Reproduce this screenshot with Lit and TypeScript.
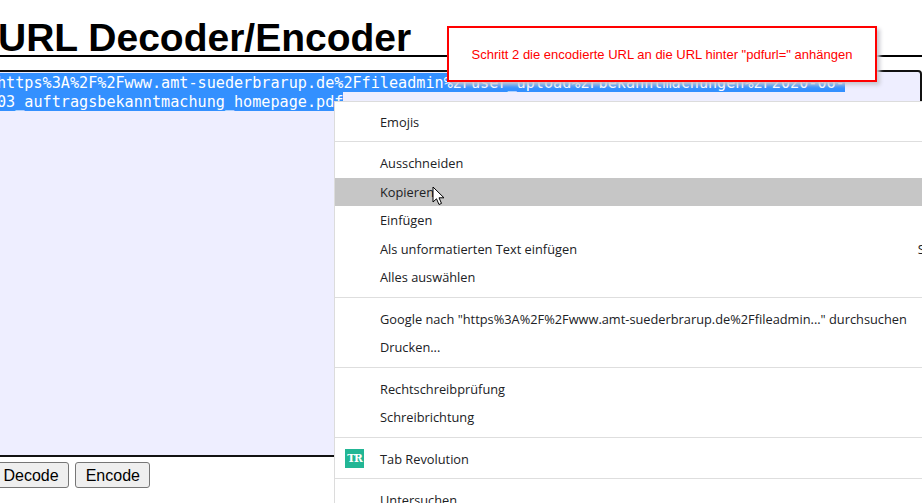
import { LitElement, html, css } from "lit";
import { customElement } from "lit/decorators.js";

type Row = { label: string; short?: string; hover?: boolean; icon?: boolean };

const groups: Row[][] = [
  [{ label: "Emojis" }],
  [
    { label: "Ausschneiden" },
    { label: "Kopieren", hover: true },
    { label: "Einfügen" },
    { label: "Als unformatierten Text einfügen", short: "Strg+Umschalt+V" },
    { label: "Alles auswählen" },
  ],
  [
    { label: 'Google nach "https%3A%2F%2Fwww.amt-suederbrarup.de%2Ffileadmin..." durchsuchen' },
    { label: "Drucken..." },
  ],
  [{ label: "Rechtschreibprüfung" }, { label: "Schreibrichtung" }],
  [{ label: "Tab Revolution", icon: true }],
  [{ label: "Untersuchen" }],
];

@customElement("app-root")
export class AppRoot extends LitElement {
  static styles = css`
    :host {
      display: block;
      position: relative;
      width: 922px;
      height: 503px;
      overflow: hidden;
      background: #fff;
      font-family: "Liberation Sans", Arial, sans-serif;
    }
    .page {
      margin-left: -8px;
      display: flex;
      flex-direction: column;
    }
    h1 {
      margin: 0;
      padding: 19px 0 0 6px;
      height: 36px;
      box-sizing: content-box;
      font: bold 39px/38px "Liberation Sans", Arial, sans-serif;
      color: #000;
      border-bottom: 2px solid #000;
    }
    .area {
      margin-top: 13px;
      width: 930px;
      height: 387px;
      box-sizing: border-box;
      border: 2px solid #111;
      border-radius: 4px;
      background: #eeeeff;
      padding: 1px 0 0 3px;
      font: 15.15px/18px "DejaVu Sans Mono", monospace;
      color: #fff;
    }
    .sel {
      display: block;
      width: fit-content;
      padding-top: 1px;
      background: #3390ff;
      white-space: pre;
    }
    .buttons {
      margin-top: 5px;
      margin-left: 1px;
      display: flex;
      gap: 6px;
    }
    button {
      height: 26px;
      padding: 1px 9.5px 0;
      border: 1px solid #767676;
      border-radius: 3px;
      background: #efefef;
      color: #000;
      font: 16px "Liberation Sans", Arial, sans-serif;
    }
    .callout {
      position: absolute;
      left: 447px;
      top: 26px;
      width: 430px;
      height: 56px;
      box-sizing: border-box;
      border: 2px solid #f00;
      background: #fff;
      box-shadow: 3px 3px 4px #c8c8d0;
      display: flex;
      align-items: center;
      justify-content: center;
      color: #f00;
      font-size: 13px;
    }
    .menu {
      position: absolute;
      left: 334px;
      top: 101px;
      width: 706px;
      height: 420px;
      box-sizing: border-box;
      padding-top: 5.6px;
      background: #fff;
      border-top: 1px solid #dcdcdc;
      border-left: 1px solid #dcdcdc;
      font: 12.8px "Open Sans", sans-serif;
      color: #202124;
    }
    .sep {
      height: 1px;
      margin: 5px 0 7px;
      background: #dedede;
    }
    .row {
      position: relative;
      height: 28.5px;
      display: flex;
      align-items: center;
      justify-content: space-between;
      padding: 0 20px 0 45px;
    }
    .row.hover {
      background: #c6c6c6;
    }
    .icon {
      position: absolute;
      left: 10px;
      top: 4px;
      width: 19px;
      height: 19px;
      background: #22b695;
      color: #fff;
      font: 900 10.5px/19px "DejaVu Serif", serif;
      letter-spacing: -1px;
      text-align: center;
    }
    .cursor {
      position: absolute;
      left: 432px;
      top: 186px;
      width: 14px;
      height: 21px;
    }
  `;

  render() {
    return html`
      <div class="page">
        <h1>URL Decoder/Encoder</h1>
        <div class="area">
          <span class="sel">https%3A%2F%2Fwww.amt-suederbrarup.de%2Ffileadmin%2Fuser_upload%2Fbekanntmachungen%2F2020-06-</span>
          <span class="sel">03_auftragsbekanntmachung_homepage.pdf</span>
        </div>
        <div class="buttons">
          <button>Decode</button>
          <button>Encode</button>
        </div>
      </div>
      <div class="callout">Schritt 2 die encodierte URL an die URL hinter "pdfurl=" anhängen</div>
      <div class="menu">
        ${groups.map(
          (g, i) => html`
            ${i > 0 ? html`<div class="sep"></div>` : ""}
            ${g.map(
              (r) => html`
                <div class="row ${r.hover ? "hover" : ""}">
                  ${r.icon ? html`<span class="icon">TR</span>` : ""}
                  <span>${r.label}</span>
                  ${r.short ? html`<span>${r.short}</span>` : ""}
                </div>
              `
            )}
          `
        )}
      </div>
      <svg class="cursor" viewBox="0 0 14 21">
        <path d="M1 1 L1 16 L4.5 12.8 L7 18.5 L9.5 17.4 L7 11.8 L12 11.8 Z" fill="#fff" stroke="#000" stroke-width="1"></path>
      </svg>
    `;
  }
}
